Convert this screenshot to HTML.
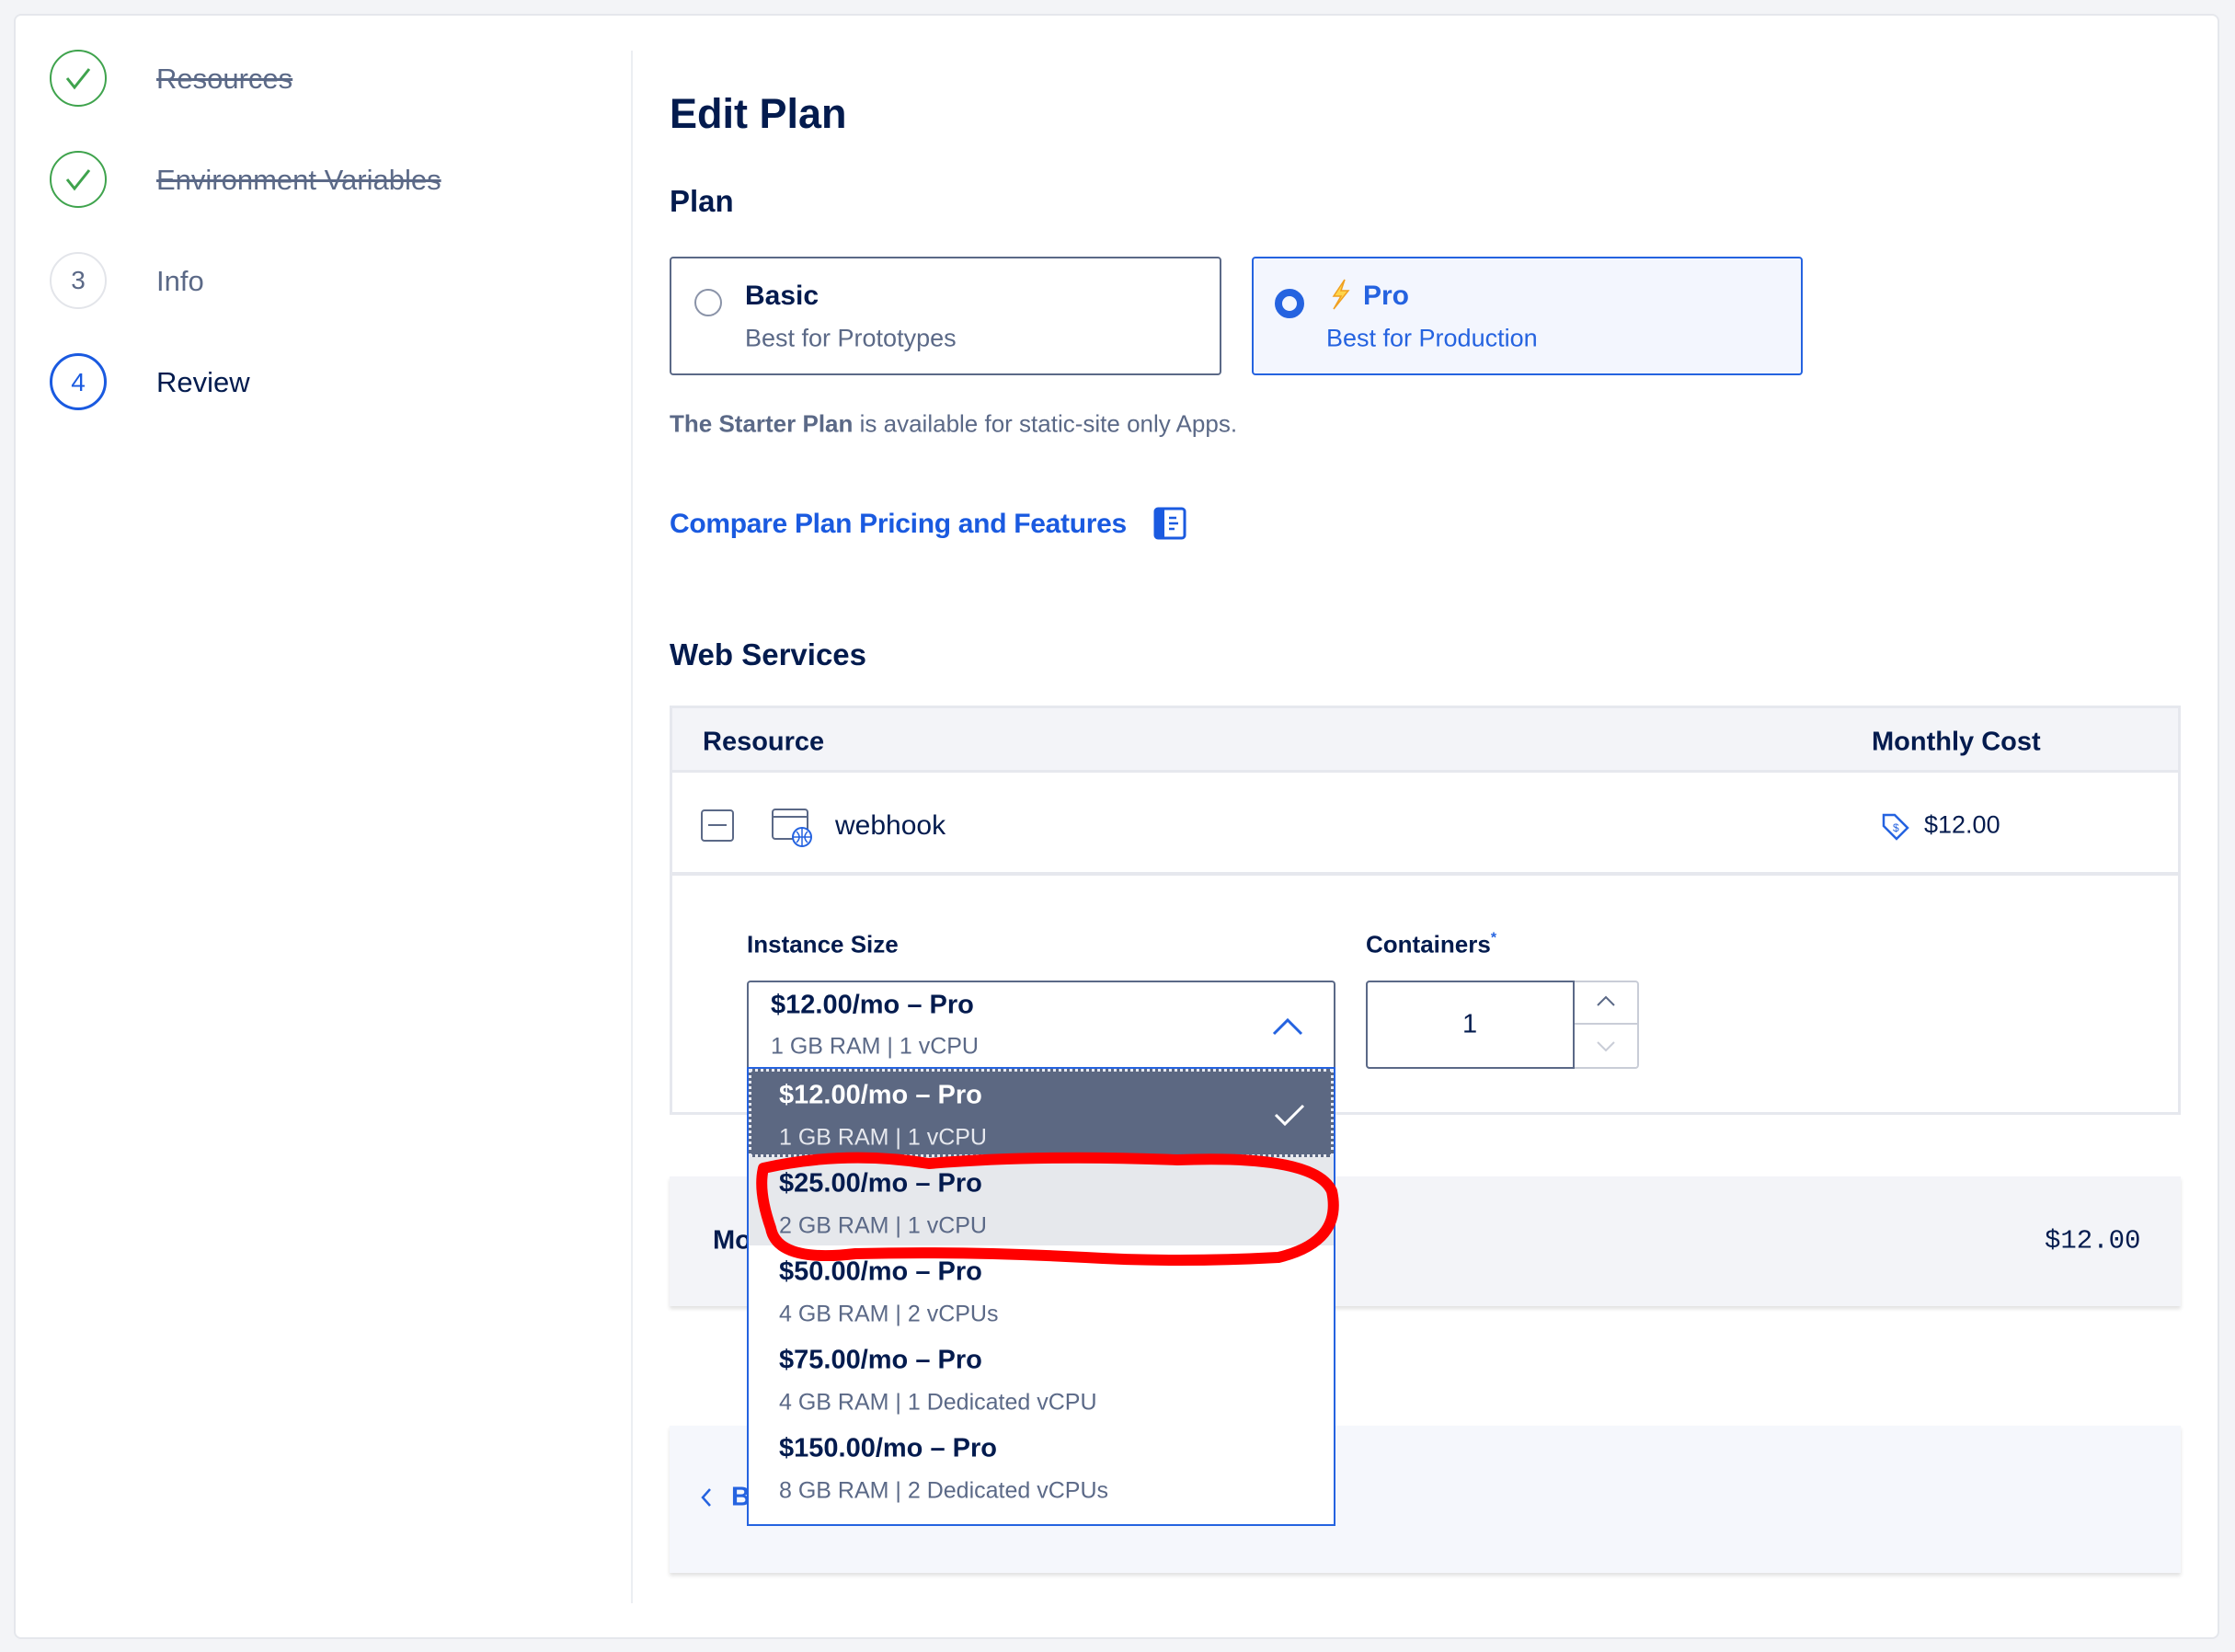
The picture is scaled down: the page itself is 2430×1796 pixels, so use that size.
<!DOCTYPE html>
<html><head><meta charset="utf-8"><style>
*{margin:0;padding:0;box-sizing:border-box}
body{width:2430px;height:1796px;background:#f3f4f7;font-family:"Liberation Sans",sans-serif;color:#031b4e;position:relative;overflow:hidden}
.a{position:absolute;white-space:nowrap}
.card{position:absolute;left:15px;top:15px;width:2398px;height:1767px;background:#fff;border:2px solid #e5e7ec;border-radius:8px}
.circ{position:absolute;width:62px;height:62px;border-radius:50%;text-align:center;line-height:58px;font-size:28px}
.st{font-size:31px;color:#5b6987}
.strike{text-decoration:line-through}
.mid{transform:translateY(-50%)}
.sub{font-size:27px;color:#5b6987}
</style></head><body>
<div class="card"></div>
<!-- sidebar -->
<div class="circ" style="left:54px;top:54px;border:2px solid #3fa34d"><svg width="58" height="58" viewBox="0 0 58 58"><path d="M17 29 L25 39 L41 19" fill="none" stroke="#3fa34d" stroke-width="3"/></svg></div>
<div class="a st strike mid" style="left:170px;top:86px">Resources</div>
<div class="circ" style="left:54px;top:164px;border:2px solid #3fa34d"><svg width="58" height="58" viewBox="0 0 58 58"><path d="M17 29 L25 39 L41 19" fill="none" stroke="#3fa34d" stroke-width="3"/></svg></div>
<div class="a st strike mid" style="left:170px;top:196px">Environment Variables</div>
<div class="circ" style="left:54px;top:274px;border:2px solid #e3e5ea;color:#5b6987">3</div>
<div class="a st mid" style="left:170px;top:306px">Info</div>
<div class="circ" style="left:54px;top:384px;border:3px solid #1a5ae0;color:#1a5ae0">4</div>
<div class="a st mid" style="left:170px;top:416px;color:#031b4e">Review</div>
<div class="a" style="left:686px;top:55px;width:2px;height:1688px;background:#eceef2"></div>
<!-- main -->
<div class="a mid" style="left:728px;top:124px;font-size:45px;font-weight:bold">Edit Plan</div>
<div class="a mid" style="left:728px;top:219px;font-size:33px;font-weight:bold">Plan</div>
<div class="a" style="left:728px;top:279px;width:600px;height:129px;border:2px solid #5b6987;border-radius:4px"></div>
<div class="a" style="left:755px;top:314px;width:30px;height:30px;border:2px solid #8a93a8;border-radius:50%"></div>
<div class="a mid" style="left:810px;top:322px;font-size:30px;font-weight:bold">Basic</div>
<div class="a sub mid" style="left:810px;top:368px">Best for Prototypes</div>
<div class="a" style="left:1361px;top:279px;width:599px;height:129px;border:2px solid #2563e0;border-radius:4px;background:#f3f6fe"></div>
<div class="a" style="left:1386px;top:314px;width:32px;height:32px;border:8px solid #2563e0;border-radius:50%"></div>
<svg class="a" style="left:1444px;top:302px" width="26" height="36" viewBox="0 0 26 36"><path d="M18 2 L6 20 L14 20 L6 34 L22 14 L14 14 Z" fill="#ffd54a" stroke="#f0a020" stroke-width="1.5"/></svg>
<div class="a mid" style="left:1482px;top:322px;font-size:30px;font-weight:bold;color:#2563e0">Pro</div>
<div class="a mid" style="left:1442px;top:368px;font-size:27px;color:#2563e0">Best for Production</div>
<div class="a mid" style="left:728px;top:461px;font-size:26px;color:#5b6987"><b>The Starter Plan</b> is available for static-site only Apps.</div>
<div class="a mid" style="left:728px;top:570px;font-size:30px;font-weight:bold;color:#1a5ae0;letter-spacing:-0.3px">Compare Plan Pricing and Features</div>
<svg class="a" style="left:1254px;top:551px" width="36" height="36" viewBox="0 0 36 36"><rect x="2" y="2" width="32" height="32" rx="3" fill="none" stroke="#1a5ae0" stroke-width="3"/><rect x="2" y="2" width="10" height="32" fill="#1a5ae0"/><path d="M17 12h8M17 18h10M17 24h6" stroke="#1a5ae0" stroke-width="2.5"/></svg>
<div class="a mid" style="left:728px;top:712px;font-size:33px;font-weight:bold">Web Services</div>
<!-- table -->
<div class="a" style="left:728px;top:767px;width:1643px;height:445px;border:3px solid #e6e8ee;background:#fff"></div>
<div class="a" style="left:731px;top:770px;width:1637px;height:70px;background:#f3f4f8;border-bottom:3px solid #e6e8ee"></div>
<div class="a mid" style="left:764px;top:807px;font-size:29px;font-weight:bold">Resource</div>
<div class="a mid" style="left:2035px;top:807px;font-size:29px;font-weight:bold">Monthly Cost</div>
<div class="a" style="left:731px;top:948px;width:1637px;height:4px;background:#e6e8ee"></div>
<div class="a" style="left:762px;top:880px;width:36px;height:35px;border:2px solid #5b6987;border-radius:4px"></div>
<div class="a" style="left:770px;top:896px;width:20px;height:2px;background:#5b6987"></div>
<svg class="a" style="left:838px;top:878px" width="48" height="44" viewBox="0 0 48 44"><rect x="2" y="2" width="38" height="32" rx="3" fill="none" stroke="#5b6987" stroke-width="2"/><path d="M2 10h38" stroke="#5b6987" stroke-width="2"/><circle cx="34" cy="32" r="10" fill="#fff" stroke="#2563e0" stroke-width="2"/><path d="M24 32h20M34 22v20M28 26q6 6 0 12M40 26q-6 6 0 12" fill="none" stroke="#2563e0" stroke-width="1.5"/></svg>
<div class="a mid" style="left:908px;top:898px;font-size:30px;color:#031b4e">webhook</div>
<svg class="a" style="left:2044px;top:882px" width="34" height="34" viewBox="0 0 34 34"><path d="M4 4h12l14 14-12 12L4 16Z" fill="none" stroke="#2563e0" stroke-width="2.5"/><text x="14" y="22" font-size="12" fill="#2563e0" font-family="Liberation Sans">$</text></svg>
<div class="a mid" style="left:2092px;top:897px;font-size:27px">$12.00</div>
<div class="a mid" style="left:812px;top:1027px;font-size:26px;font-weight:bold">Instance Size</div>
<div class="a mid" style="left:1485px;top:1027px;font-size:26px;font-weight:bold">Containers<span style="color:#2563e0;font-size:16px;vertical-align:top">*</span></div>
<div class="a" style="left:812px;top:1066px;width:640px;height:96px;border:2px solid #5b6987;border-bottom:none;border-radius:4px 4px 0 0;background:#fff"></div>
<div class="a mid" style="left:838px;top:1093px;font-size:29px;font-weight:bold">$12.00/mo – Pro</div>
<div class="a mid" style="left:838px;top:1138px;font-size:25px;color:#5b6987">1 GB RAM | 1 vCPU</div>
<svg class="a" style="left:1382px;top:1104px" width="36" height="24" viewBox="0 0 36 24"><path d="M3 20 L18 5 L33 20" fill="none" stroke="#2563e0" stroke-width="3"/></svg>
<div class="a" style="left:1485px;top:1066px;width:297px;height:96px;border:2px solid #c9cdd7;border-radius:4px"></div>
<div class="a" style="left:1485px;top:1066px;width:227px;height:96px;border:2px solid #5b6987;border-radius:4px 0 0 4px"></div>
<div class="a" style="left:1712px;top:1112px;width:70px;height:2px;background:#c9cdd7"></div>
<div class="a mid" style="left:1590px;top:1114px;font-size:29px">1</div>
<svg class="a" style="left:1734px;top:1080px" width="24" height="16" viewBox="0 0 24 16"><path d="M3 13 L12 4 L21 13" fill="none" stroke="#5b6987" stroke-width="2"/></svg>
<svg class="a" style="left:1734px;top:1130px" width="24" height="16" viewBox="0 0 24 16"><path d="M3 3 L12 12 L21 3" fill="none" stroke="#c9cdd7" stroke-width="2"/></svg>
<!-- total card -->
<div class="a" style="left:728px;top:1279px;width:1643px;height:141px;background:#f3f4f8;box-shadow:0 3px 4px rgba(0,0,0,0.12)"></div>
<div class="a mid" style="left:775px;top:1349px;font-size:29px;font-weight:bold">Mo</div>
<div class="a mid" style="left:2223px;top:1349px;font-size:29px;font-family:'Liberation Mono',monospace">$12.00</div>
<!-- bottom card -->
<div class="a" style="left:728px;top:1550px;width:1643px;height:160px;background:#f5f7fc;box-shadow:0 3px 4px rgba(0,0,0,0.12)"></div>
<svg class="a" style="left:760px;top:1616px" width="16" height="24" viewBox="0 0 16 24"><path d="M12 3 L4 12 L12 21" fill="none" stroke="#2563e0" stroke-width="2.5"/></svg>
<div class="a mid" style="left:795px;top:1628px;font-size:29px;font-weight:bold;color:#2563e0">B</div>
<!-- dropdown -->
<div class="a" style="left:812px;top:1160px;width:640px;height:499px;border:2px solid #2563e0;background:#fff;overflow:hidden">
 <div class="a" style="left:0;top:0;width:636px;height:96px;background:#5c6882;border:3px dotted #e8eaf0"></div>
 <div class="a mid" style="left:33px;top:29px;font-size:29px;font-weight:bold;color:#fff">$12.00/mo – Pro</div>
 <div class="a mid" style="left:33px;top:75px;font-size:25px;color:#e6e8ee">1 GB RAM | 1 vCPU</div>
 <svg class="a" style="left:570px;top:36px" width="36" height="28" viewBox="0 0 36 28"><path d="M3 14 L13 24 L33 4" fill="none" stroke="#fff" stroke-width="3"/></svg>
 <div class="a" style="left:0;top:96px;width:636px;height:96px;background:#e6e8ec"></div>
 <div class="a mid" style="left:33px;top:125px;font-size:29px;font-weight:bold">$25.00/mo – Pro</div>
 <div class="a mid" style="left:33px;top:171px;font-size:25px;color:#5b6987">2 GB RAM | 1 vCPU</div>
 <div class="a mid" style="left:33px;top:221px;font-size:29px;font-weight:bold">$50.00/mo – Pro</div>
 <div class="a mid" style="left:33px;top:267px;font-size:25px;color:#5b6987">4 GB RAM | 2 vCPUs</div>
 <div class="a mid" style="left:33px;top:317px;font-size:29px;font-weight:bold">$75.00/mo – Pro</div>
 <div class="a mid" style="left:33px;top:363px;font-size:25px;color:#5b6987">4 GB RAM | 1 Dedicated vCPU</div>
 <div class="a mid" style="left:33px;top:413px;font-size:29px;font-weight:bold">$150.00/mo – Pro</div>
 <div class="a mid" style="left:33px;top:459px;font-size:25px;color:#5b6987">8 GB RAM | 2 Dedicated vCPUs</div>
 <div class="a mid" style="left:33px;top:509px;font-size:29px;font-weight:bold">$300.00/mo – Pro</div>
</div>
<!-- red scribble -->
<svg class="a" style="left:800px;top:1245px" width="670" height="140" viewBox="0 0 670 140"><path d="M30 25 Q120 5 210 20 Q330 10 480 16 Q630 10 648 50 Q660 105 590 122 Q480 128 380 122 Q250 115 130 118 Q45 128 38 90 Q24 50 30 25 Z" fill="none" stroke="#ff0000" stroke-width="12" stroke-linejoin="round"/></svg>
</body></html>
